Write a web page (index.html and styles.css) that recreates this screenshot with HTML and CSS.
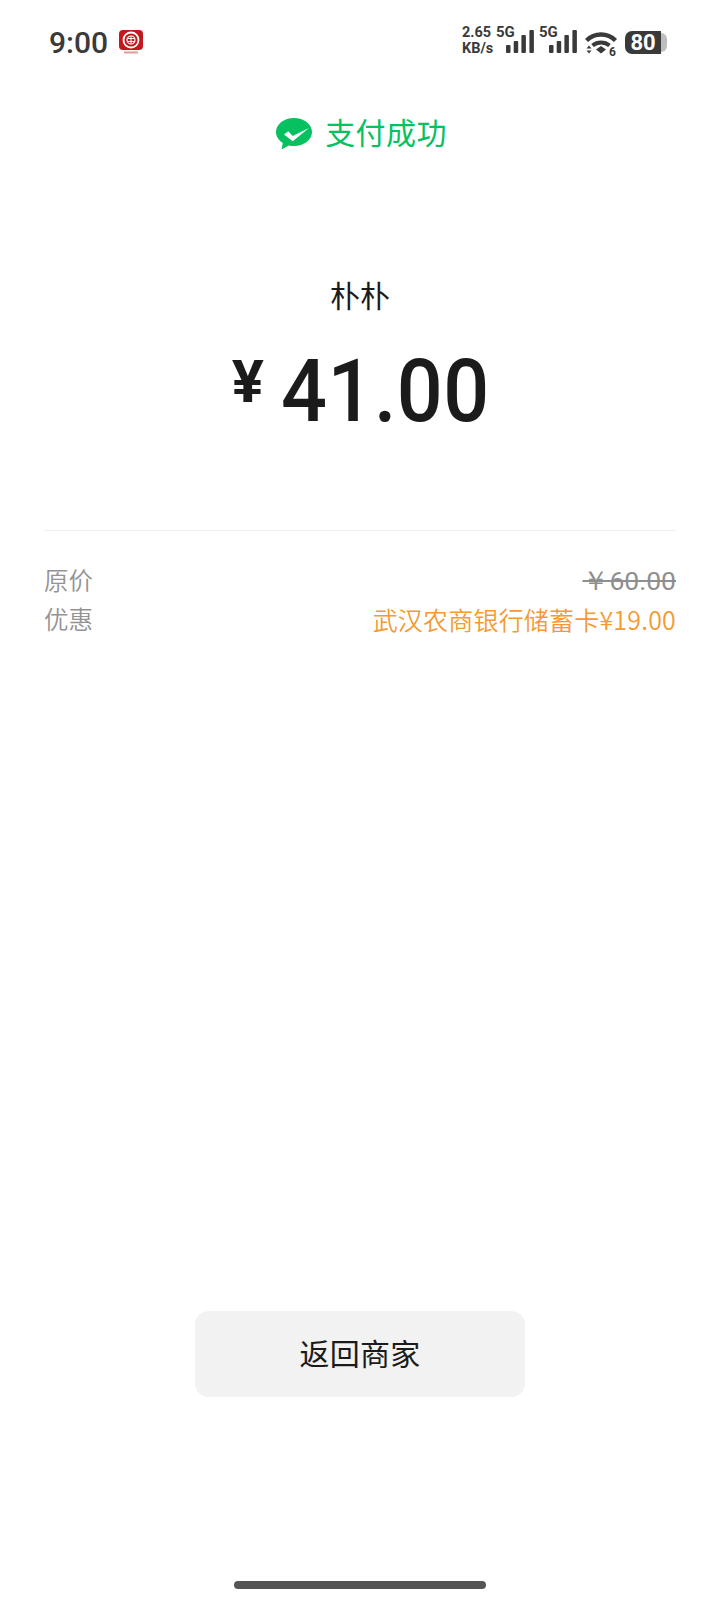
FILE: index.html
```html
<!DOCTYPE html>
<html lang="zh">
<head>
<meta charset="utf-8">
<title>支付成功</title>
<link rel="stylesheet" href="styles.css">
</head>
<body>
<div class="page">
  <header class="status">
    <div class="status-left">
      <span class="time">9:00</span>
      <svg class="app" width="26" height="26" viewBox="0 0 26 26">
        <rect x="1" y="0" width="24" height="20" rx="4" fill="#c8161d"/>
        <circle cx="13" cy="10" r="7.500" fill="none" stroke="#fff" stroke-width="1.800"/>
        <circle cx="13" cy="10" r="4" fill="none" stroke="#fff" stroke-width="1.200"/>
        <path d="M9.500 8.500h7M9.500 11.500h7M13 6.500v7" stroke="#fff" stroke-width="1" fill="none"/>
        <rect x="6" y="21.500" width="14" height="2" fill="#e39a9a"/>
      </svg>
    </div>
    <div class="status-right">
      <div class="speed"><span>2.65</span><span>KB/s</span></div>
      <div class="sig">
        <span class="net">5G</span>
        <svg width="29" height="24" viewBox="0 0 29 24"><g fill="#3a3a3a"><rect x="0" y="15" width="4.500" height="8" rx="1"/><rect x="7.700" y="11" width="4.500" height="12" rx="1"/><rect x="15.400" y="5" width="4.500" height="18" rx="1"/><rect x="23.400" y="0" width="4.500" height="23" rx="1"/></g></svg>
      </div>
      <div class="sig sig2">
        <span class="net">5G</span>
        <svg width="29" height="24" viewBox="0 0 29 24"><g fill="#3a3a3a"><rect x="0" y="15" width="4.500" height="8" rx="1"/><rect x="7.700" y="11" width="4.500" height="12" rx="1"/><rect x="15.400" y="5" width="4.500" height="18" rx="1"/><rect x="23.400" y="0" width="4.500" height="23" rx="1"/></g></svg>
      </div>
      <svg class="wifi" width="33" height="28" viewBox="0 0 33 28">
        <path d="M1.500 9.500C9.500 1.500 22.500 1.500 30.500 9.500" fill="none" stroke="#3a3a3a" stroke-width="4.400"/>
        <path d="M7.500 14.500C12.500 10.500 19.500 10.500 24.500 14.500" fill="none" stroke="#3a3a3a" stroke-width="4"/>
        <path d="M11 18.500L16 15L21 18.500L16 22.500Z" fill="#3a3a3a"/>
        <path d="M1.500 17.500L4 14.500L6.500 17.500ZM1.500 19.500L4 22.500L6.500 19.500Z" fill="#3a3a3a"/>
        <text x="24" y="24.500" class="wifi-num">6</text>
      </svg>
      <div class="battery"><span class="batt-body"><span class="batt-num">80</span></span><span class="batt-cap"></span></div>
    </div>
  </header>

  <div class="result">
    <svg class="wechat" width="38" height="34" viewBox="0 0 38 34">
      <path d="M19 1C9 1 1 7.300 1 15c0 4.500 2.700 8.400 6.800 11L6.500 32.500 14 28.400c1.600.4 3.300.6 5 .6 10 0 18-6.300 18-14S29 1 19 1Z" fill="#07c160"/>
      <path d="M9 17.600L13.300 14.300L17.700 19L34 11L17.700 24.300Z" fill="#fff"/>
    </svg>
    <span class="result-text">支付成功</span>
  </div>

  <div class="merchant">朴朴</div>
  <div class="amount"><span class="yen">¥</span><span class="num">41.00</span></div>

  <div class="details">
    <div class="row"><span class="label">原价</span><s class="orig">￥60.00</s></div>
    <div class="row"><span class="label">优惠</span><span class="promo">武汉农商银行储蓄卡¥19.00</span></div>
  </div>

  <div class="spacer"></div>
  <div class="btn">返回商家</div>
  <div class="home"></div>
</div>
</body>
</html>
```
FILE: styles.css
```css
* { box-sizing: border-box; }
html, body { margin: 0; padding: 0; background: #fff; }
body { font-family: "Noto Sans CJK SC", Roboto, "Noto Sans", sans-serif; }
.page { width: 720px; height: 1600px; display: flex; flex-direction: column; }

.status { height: 84px; padding: 22px 53px 0 49px; display: flex; justify-content: space-between; align-items: flex-start; color: #3a3a3a; }
.status-left { display: flex; align-items: center; gap: 10px; height: 40px; }
.time { font-family: Roboto, sans-serif; font-size: 30px; font-weight: 500; }
.app { margin-top: 2px; }
.status-right { display: flex; align-items: center; height: 40px; }
.speed { display: flex; flex-direction: column; font-family: Roboto, sans-serif; font-size: 14.500px; font-weight: 700; line-height: 16px; width: 34px; margin-top: -3px; margin-left: -1px; }
.sig { position: relative; width: 29px; height: 24px; margin-left: 10px; }
.sig2 { margin-left: 14px; }
.net { position: absolute; left: -10px; top: -5px; font-family: Roboto, sans-serif; font-size: 15px; font-weight: 700; line-height: 15px; }
.wifi { margin-left: 7px; margin-top: 5px; }
.wifi-num { font-family: Roboto, sans-serif; font-size: 12px; font-weight: 700; fill: #3a3a3a; }
.battery { display: flex; align-items: center; margin-left: 7px; }
.batt-body { width: 36px; height: 23px; background: #3a3a3a; border-radius: 7px 0 0 7px; display: flex; align-items: center; justify-content: center; }
.batt-num { font-family: Roboto, sans-serif; font-size: 22px; font-weight: 700; color: #fff; line-height: 23px; }
.batt-cap { width: 6px; height: 19px; background: #bdbdbd; border-radius: 0 6px 6px 0; }

.result { display: flex; align-items: center; justify-content: center; gap: 12px; height: 50px; margin-top: 22px; padding-left: 2px; }
.wechat { margin-top: 6px; }
.result-text { font-size: 30px; color: #07c160; letter-spacing: 0.4px; line-height: 40px; }

.merchant { margin-top: 118px; text-align: center; font-size: 30px; line-height: 40px; color: #1b1b1b; }
.amount { margin-top: 32px; padding-left: 3px; display: flex; justify-content: center; align-items: flex-start; height: 90px; color: #1b1b1b; font-family: Roboto, sans-serif; }
.yen { font-size: 60px; font-weight: 700; line-height: 64px; margin-right: 17px; margin-top: 4px; }
.num { font-size: 87px; font-weight: 550; line-height: 90px; letter-spacing: 0.5px; transform: scaleX(0.93); transform-origin: left center; margin-right: -14px; }

.details { margin: 94px 44px 0; padding-top: 33px; border-top: 1px solid #f0f0f0; display: flex; flex-direction: column; gap: 7px; }
.row { display: flex; justify-content: space-between; align-items: center; height: 32px; font-size: 25px; line-height: 32px; }
.label { color: #939393; font-size: 24.500px; font-weight: 350; }
.orig { color: #8f8f8f; font-family: Roboto, sans-serif; font-size: 26.500px; margin-top: 2px; }
.promo { color: #f39a33; font-weight: 350; letter-spacing: 0.2px; }

.spacer { flex: 1; }
.btn { width: 330px; height: 86px; align-self: center; background: #f2f2f2; border-radius: 14px; display: flex; align-items: center; justify-content: center; padding-bottom: 4px; font-size: 30px; letter-spacing: 0.3px; color: #1b1b1b; }
.home { width: 252px; height: 8px; align-self: center; background: #555; border-radius: 4px; margin-top: 184px; margin-bottom: 11px; }
```
